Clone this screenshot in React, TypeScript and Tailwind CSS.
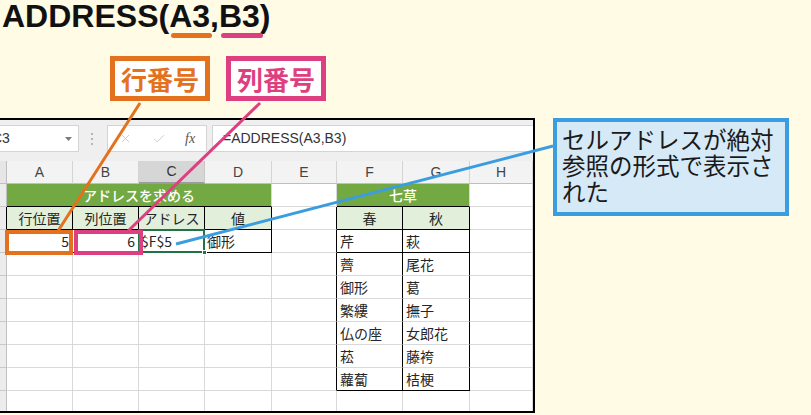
import React from 'react';
import { X, Check } from 'lucide-react';

type Side = 'g' | 'k' | 'n';

const RIGHT: Record<Side, string> = {
  g: 'border-r-[#d9d9d9]',
  k: 'border-r-black',
  n: 'border-r-transparent',
};
const BOTTOM: Record<Side, string> = {
  g: 'border-b-[#d9d9d9]',
  k: 'border-b-black',
  n: 'border-b-transparent',
};

const COLS = 'grid grid-cols-[7px_66px_66px_66px_67px_65px_66px_67px_63px]';
const JP = "font-['Noto_Sans_CJK_JP','Noto_Sans',sans-serif]";
const LATIN = "font-['Liberation_Sans','Noto_Sans_CJK_JP',sans-serif]";

interface CellProps {
  children?: React.ReactNode;
  r?: Side;
  b?: Side;
  className?: string;
}

function Cell({ children, r = 'g', b = 'g', className = '' }: CellProps) {
  return (
    <div
      className={`flex h-full min-w-0 items-center overflow-hidden whitespace-nowrap border-r border-b text-[14px] text-[#262626] ${RIGHT[r]} ${BOTTOM[b]} ${className}`}
    >
      {children}
    </div>
  );
}

function RowHead({ k = false }: { k?: boolean }) {
  return (
    <div
      className={`h-full border-r border-b border-b-[#c8c8c8] bg-[#ececec] ${k ? 'border-r-black' : 'border-r-[#c0c0c0]'}`}
    />
  );
}

// 七草 data, rows 3..9
const nanakusa: [string, string][] = [
  ['芹', '萩'],
  ['薺', '尾花'],
  ['御形', '葛'],
  ['繁縷', '撫子'],
  ['仏の座', '女郎花'],
  ['菘', '藤袴'],
  ['蘿蔔', '桔梗'],
];

function FormulaBar() {
  return (
    <div className="flex h-[41px] items-start bg-[#efefef] pt-[5px]">
      <div className="flex h-[27px] w-[79px] items-center overflow-hidden border border-l-0 border-[#d4d4d4] bg-white">
        <span className={`${LATIN} -ml-[8px] text-[14px] text-[#333]`}>C3</span>
        <svg className="ml-auto mr-[6px]" width="7" height="4" viewBox="0 0 7 4">
          <path d="M0 0h7L3.5 4z" fill="#7a7a7a" />
        </svg>
      </div>
      <div className="ml-[12px] mr-[12px] flex h-[27px] flex-col items-center justify-center gap-[3px]">
        <span className="h-[2px] w-[2px] bg-[#b5b5b5]" />
        <span className="h-[2px] w-[2px] bg-[#b5b5b5]" />
        <span className="h-[2px] w-[2px] bg-[#b5b5b5]" />
      </div>
      <div className="ml-[2px] flex h-[27px] w-[100px] items-center border border-[#d4d4d4] bg-white">
        <X className="ml-[11px]" size={13} strokeWidth={1.5} color="#c4c4c4" />
        <Check className="ml-[20px]" size={14} strokeWidth={1.5} color="#c4c4c4" />
        <span className="ml-[19px] font-['Liberation_Serif',serif] text-[14px] italic text-[#555]">fx</span>
      </div>
      <div className="ml-[5px] flex h-[27px] flex-1 items-center border border-r-0 border-[#d4d4d4] bg-white pl-[10px]">
        <span className={`${LATIN} text-[14px] text-[#333]`}>=ADDRESS(A3,B3)</span>
      </div>
    </div>
  );
}

function ColumnHeader() {
  const letters = ['A', 'B', 'C', 'D', 'E', 'F', 'G', 'H'];
  return (
    <div className={`${COLS} h-[23px] bg-[#f3f3f3]`}>
      <div className="border-r border-b border-[#bfbfbf] bg-[#e6e6e6]" />
      {letters.map((l) =>
        l === 'C' ? (
          <div
            key={l}
            className={`${LATIN} flex items-center justify-center border-r border-r-[#c8c8c8] border-b-2 border-b-[#9c9c9c] bg-[#d6d6d6] text-[14px] text-[#333]`}
          >
            {l}
          </div>
        ) : (
          <div
            key={l}
            className={`${LATIN} flex items-center justify-center border-r border-b border-r-[#d4d4d4] border-b-[#bfbfbf] text-[14px] text-[#444]`}
          >
            {l}
          </div>
        )
      )}
    </div>
  );
}

function Sheet() {
  return (
    <div className={`${JP} h-[295px] w-[535px] shrink-0 overflow-hidden border-t-2 border-r-2 border-b-2 border-black bg-white`}>
      <FormulaBar />
      <ColumnHeader />

      {/* row 1: green headers */}
      <div className={`${COLS} h-[23px]`}>
        <RowHead />
        <Cell b="k" className="col-span-4 justify-center bg-[#72a942] font-medium !text-white">
          アドレスを求める
        </Cell>
        <Cell />
        <Cell b="k" className="col-span-2 justify-center bg-[#72a942] font-medium !text-white">
          七草
        </Cell>
        <Cell />
      </div>

      {/* row 2: labels */}
      <div className={`${COLS} h-[23px]`}>
        <RowHead k />
        <Cell r="k" b="k" className="justify-center bg-[#e2efda]">行位置</Cell>
        <Cell r="k" b="k" className="justify-center bg-[#e2efda]">列位置</Cell>
        <Cell r="k" b="k" className="justify-center bg-[#e2efda]">アドレス</Cell>
        <Cell r="k" b="k" className="justify-center bg-[#e2efda]">値</Cell>
        <Cell r="k" />
        <Cell r="k" b="k" className="justify-center bg-[#e2efda]">春</Cell>
        <Cell r="k" b="k" className="justify-center bg-[#e2efda]">秋</Cell>
        <Cell />
      </div>

      {/* row 3: values */}
      <div className={`${COLS} h-[23px]`}>
        <RowHead k />
        <Cell r="k" b="k" className="justify-end pr-[3px]">5</Cell>
        <Cell r="k" b="k" className="justify-end pr-[3px]">6</Cell>
        <Cell r="k" b="k" className="relative overflow-visible pl-[2px]">
          $F$5
          <span className="absolute -top-[1px] -left-[1px] -right-[1px] -bottom-[1px] border-2 border-[#217346]" />
          <span className="absolute -right-[3px] -bottom-[3px] h-[5px] w-[5px] border border-white bg-[#217346]" />
        </Cell>
        <Cell r="k" b="k" className="pl-[2px]">御形</Cell>
        <Cell r="k" />
        <Cell r="k" b="k" className="pl-[3px]">{nanakusa[0][0]}</Cell>
        <Cell r="k" b="k" className="pl-[3px]">{nanakusa[0][1]}</Cell>
        <Cell />
      </div>

      {/* rows 4..9 */}
      {nanakusa.slice(1).map(([a, b], i) => (
        <div key={a} className={`${COLS} h-[23px]`}>
          <RowHead />
          <Cell />
          <Cell />
          <Cell />
          <Cell />
          <Cell r="k" />
          <Cell r="k" b={i === nanakusa.length - 2 ? 'k' : 'g'} className="pl-[3px]">{a}</Cell>
          <Cell r="k" b={i === nanakusa.length - 2 ? 'k' : 'g'} className="pl-[3px]">{b}</Cell>
          <Cell />
        </div>
      ))}

      {/* row 10 */}
      <div className={`${COLS} h-[23px]`}>
        <RowHead />
        <Cell />
        <Cell />
        <Cell />
        <Cell />
        <Cell />
        <Cell />
        <Cell />
        <Cell />
      </div>
    </div>
  );
}

export default function App() {
  return (
    <div className="relative h-[415px] w-[811px] overflow-hidden bg-[#fffbe5]">
      {/* title */}
      <div className="h-[58px] pl-[2px]">
        <div className={`${LATIN} text-[32px] font-bold leading-[36px] text-[#111] -mt-[2px]`}>
          ADDRESS(
          <span className="relative inline-block">
            A3
            <span className="absolute top-[35px] left-[2px] -right-[2px] h-[5px] rounded-full bg-[#e3711e]" />
          </span>
          ,
          <span className="relative inline-block">
            B3
            <span className="absolute top-[35px] left-[2px] -right-[3px] h-[5px] rounded-full bg-[#de3f80]" />
          </span>
          )
        </div>
      </div>

      {/* labels */}
      <div className={`${JP} flex h-[45px] gap-[16px] pl-[110px]`}>
        <div className="flex h-[45px] w-[100px] items-center justify-center border-[5px] border-[#e3711e] bg-white">
          <span className="text-[26px] font-bold leading-none text-[#e3711e]">行番号</span>
        </div>
        <div className="flex h-[45px] w-[100px] items-center justify-center border-[5px] border-[#de3f80] bg-white">
          <span className="text-[26px] font-bold leading-none text-[#de3f80]">列番号</span>
        </div>
      </div>

      {/* sheet + callout */}
      <div className="mt-[17px] flex items-start">
        <Sheet />
        <div className={`${JP} ml-[18px] h-[98px] w-[236px] overflow-hidden border-4 border-[#3b9ddf] bg-[#d5e9f7] pt-[4px] pl-[5px] text-[23.5px] leading-[26px] text-[#1a1a1a]`}>
          <div className="whitespace-nowrap">セルアドレスが絶対</div>
          <div className="whitespace-nowrap">参照の形式で表示さ</div>
          <div className="whitespace-nowrap">れた</div>
        </div>
      </div>

      {/* annotation lines */}
      <svg className="pointer-events-none absolute inset-0" width="811" height="415" viewBox="0 0 811 415">
        <line x1="140" y1="103" x2="58" y2="231" stroke="#e3711e" strokeWidth="3" />
        <line x1="260" y1="103" x2="128" y2="231" stroke="#de3f80" strokeWidth="3" />
        <line x1="553" y1="146" x2="176" y2="244" stroke="#3b9ddf" strokeWidth="3" />
        <rect x="7" y="232" width="64" height="21" fill="none" stroke="#e3711e" strokeWidth="4" />
        <rect x="76" y="232" width="65" height="21" fill="none" stroke="#de3f80" strokeWidth="4" />
      </svg>
    </div>
  );
}
